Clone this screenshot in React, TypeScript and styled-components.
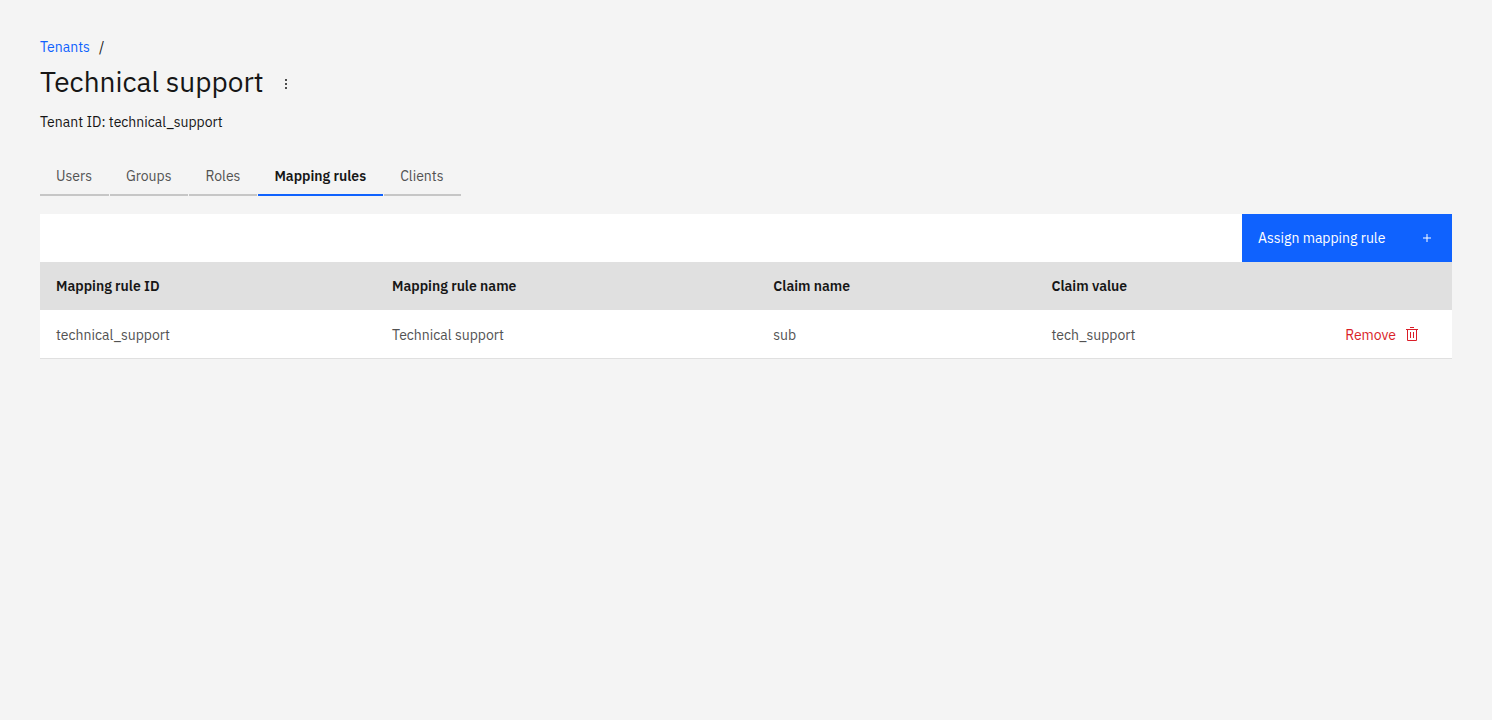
import React from "react";
import styled, { createGlobalStyle } from "styled-components";

const GlobalStyle = createGlobalStyle`
  *, *::before, *::after { box-sizing: border-box; }
  body {
    margin: 0;
    background: #f4f4f4;
    color: #161616;
    font-family: "IBM Plex Sans", "Noto Sans", sans-serif;
    font-size: 14px;
    line-height: 18px;
    -webkit-font-smoothing: antialiased;
  }
  button { font: inherit; border: 0; margin: 0; cursor: pointer; }
`;

const Page = styled.main`
  padding: 38px 40px;
`;

const Breadcrumb = styled.nav`
  display: flex;
  gap: 9px;
`;

const BreadcrumbLink = styled.a`
  color: #0f62fe;
  text-decoration: none;
`;

const TitleRow = styled.div`
  display: flex;
  align-items: flex-end;
  gap: 6px;
  margin-top: 8px;
`;

const Title = styled.h1`
  margin: 0;
  font-size: 28px;
  line-height: 36px;
  font-weight: 400;
`;

const MenuButton = styled.button`
  display: flex;
  align-items: center;
  justify-content: center;
  width: 32px;
  height: 32px;
  padding: 0;
  background: transparent;
  color: #161616;
`;

const TenantId = styled.p`
  margin: 13px 0 0;
`;

const TabList = styled.div`
  display: flex;
  gap: 1px;
  margin-top: 25px;
`;

const Tab = styled.button<{ $selected: boolean }>`
  height: 40px;
  padding: 2px 17px 0 16px;
  background: transparent;
  border-bottom: 2px solid ${(p) => (p.$selected ? "#0f62fe" : "#c6c6c6")};
  color: ${(p) => (p.$selected ? "#161616" : "#525252")};
  font-weight: ${(p) => (p.$selected ? 600 : 400)};
`;

const TableSection = styled.section`
  margin-top: 18px;
`;

const Toolbar = styled.div`
  display: flex;
  justify-content: flex-end;
  height: 48px;
  background: #ffffff;
`;

const PrimaryButton = styled.button`
  display: flex;
  align-items: center;
  justify-content: space-between;
  min-width: 210px;
  padding: 0 17px 0 16px;
  background: #0f62fe;
  color: #ffffff;
`;

const Table = styled.table`
  width: 100%;
  table-layout: fixed;
  border-spacing: 0;
  text-align: left;
`;

const HeaderCell = styled.th<{ $width: string }>`
  width: ${(p) => p.$width};
  height: 48px;
  padding: 0 16px;
  background: #e0e0e0;
  font-weight: 600;
`;

const Cell = styled.td`
  height: 49px;
  padding: 2px 16px 0;
  background: #ffffff;
  border-bottom: 1px solid #e0e0e0;
  color: #525252;
`;

const RemoveButton = styled.button`
  display: flex;
  align-items: flex-start;
  gap: 8px;
  margin-left: auto;
  padding: 0 16px 0 0;
  background: transparent;
  color: #da1e28;
`;

const CarbonIcon = ({ children }: { children: React.ReactNode }) => (
  <svg width="16" height="16" viewBox="0 0 32 32" fill="currentColor" aria-hidden="true">
    {children}
  </svg>
);

const OverflowIcon = () => (
  <CarbonIcon>
    <circle cx="16" cy="8" r="2" />
    <circle cx="16" cy="16" r="2" />
    <circle cx="16" cy="24" r="2" />
  </CarbonIcon>
);

const AddIcon = () => (
  <CarbonIcon>
    <path d="M17 15V8h-2v7H8v2h7v7h2v-7h7v-2z" />
  </CarbonIcon>
);

const TrashIcon = () => (
  <CarbonIcon>
    <path d="M12 12h2v12h-2zM18 12h2v12h-2z" />
    <path d="M4 6v2h2v20a2 2 0 0 0 2 2h16a2 2 0 0 0 2-2V8h2V6zm4 22V8h16v20zM12 2h8v2h-8z" />
  </CarbonIcon>
);

const tabs = ["Users", "Groups", "Roles", "Mapping rules", "Clients"];

const columns = [
  { label: "Mapping rule ID", width: "23.8%" },
  { label: "Mapping rule name", width: "27%" },
  { label: "Claim name", width: "19.7%" },
  { label: "Claim value", width: "18%" },
];

const rules = [
  { id: "technical_support", name: "Technical support", claim: "sub", value: "tech_support" },
];

export default function App() {
  return (
    <>
      <GlobalStyle />
      <Page>
        <Breadcrumb aria-label="Breadcrumb">
          <BreadcrumbLink href="#tenants">Tenants</BreadcrumbLink>
          <span>/</span>
        </Breadcrumb>
        <TitleRow>
          <Title>Technical support</Title>
          <MenuButton type="button" aria-label="Tenant actions">
            <OverflowIcon />
          </MenuButton>
        </TitleRow>
        <TenantId>Tenant ID: technical_support</TenantId>
        <TabList role="tablist">
          {tabs.map((tab) => (
            <Tab
              key={tab}
              type="button"
              role="tab"
              aria-selected={tab === "Mapping rules"}
              $selected={tab === "Mapping rules"}
            >
              {tab}
            </Tab>
          ))}
        </TabList>
        <TableSection>
          <Toolbar>
            <PrimaryButton type="button">
              Assign mapping rule
              <AddIcon />
            </PrimaryButton>
          </Toolbar>
          <Table>
            <thead>
              <tr>
                {columns.map((column) => (
                  <HeaderCell key={column.label} scope="col" $width={column.width}>
                    {column.label}
                  </HeaderCell>
                ))}
                <HeaderCell scope="col" $width="auto" aria-label="Actions" />
              </tr>
            </thead>
            <tbody>
              {rules.map((rule) => (
                <tr key={rule.id}>
                  <Cell>{rule.id}</Cell>
                  <Cell>{rule.name}</Cell>
                  <Cell>{rule.claim}</Cell>
                  <Cell>{rule.value}</Cell>
                  <Cell>
                    <RemoveButton type="button">
                      Remove
                      <TrashIcon />
                    </RemoveButton>
                  </Cell>
                </tr>
              ))}
            </tbody>
          </Table>
        </TableSection>
      </Page>
    </>
  );
}
